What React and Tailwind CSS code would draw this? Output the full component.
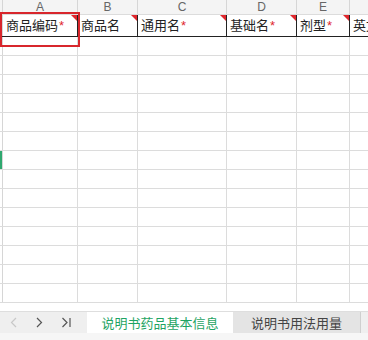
import React from "react";

const cols = [
  { key: "A", w: "w-[75px]", label: "商品编码", req: true },
  { key: "B", w: "w-[60px]", label: "商品名", req: false },
  { key: "C", w: "w-[89px]", label: "通用名", req: true },
  { key: "D", w: "w-[70px]", label: "基础名", req: true },
  { key: "E", w: "w-[53px]", label: "剂型", req: true },
  { key: "F", w: "w-[60px]", label: "英文名", req: false },
];

const rows = Array.from({ length: 14 });

function Corner() {
  return (
    <span className="absolute right-0 top-0 w-0 h-0 border-t-[6px] border-l-[6px] border-t-[#e0262c] border-l-transparent" />
  );
}

export default function App() {
  return (
    <div className="relative w-[368px] h-[340px] overflow-hidden bg-white font-['Liberation_Sans','Noto_Sans_CJK_SC',sans-serif]">
      <div className="h-[311px] overflow-hidden">
        {/* column letters */}
        <div className="flex h-[15px] bg-[#f4f4f4] border-b border-[#dcdcdc]">
          <div className="w-[3px] shrink-0 border-r border-[#d6d6d6]" />
          {cols.map(c => (
            <div key={c.key} className={`${c.w} shrink-0 border-r border-[#d6d6d6] flex items-center justify-center text-[12px] leading-none text-[#666]`}>
              {c.key !== "F" && c.key}
            </div>
          ))}
        </div>

        {/* header row */}
        <div className="flex h-[22px] border-b border-[#222]">
          <div className="w-[3px] shrink-0 border-r border-[#d6d6d6]" />
          {cols.map(c => (
            <div key={c.key} className={`${c.w} shrink-0 relative border-r border-[#222] flex items-center pl-[3px] overflow-hidden whitespace-nowrap text-[13px] text-[#222]`}>
              {c.label}
              {c.req && <span className="text-[#e0262c] ml-[1px]">*</span>}
              {c.key !== "F" && <Corner />}
            </div>
          ))}
        </div>

        {/* empty rows */}
        {rows.map((_, i) => (
          <div key={i} className="flex h-[19px] border-b border-[#dcdcdc]">
            <div className={`w-[3px] shrink-0 border-r border-[#d6d6d6] ${i === 6 ? "bg-[#2fa86f]" : ""}`} />
            {cols.map(c => (
              <div key={c.key} className={`${c.w} shrink-0 border-r border-[#dcdcdc]`} />
            ))}
          </div>
        ))}
      </div>

      {/* sheet tabs */}
      <div className="flex h-[22px] bg-[#efefef] border-t border-[#dedede] font-['Noto_Sans_CJK_SC',sans-serif]">
        <div className="w-[87px] shrink-0 flex items-center text-[#555]">
          <svg width="8" height="11" viewBox="0 0 8 11" className="ml-[10px]" fill="none" stroke="#c8c8c8" strokeWidth="1.2">
            <path d="M6 1 L1.5 5.5 L6 10" />
          </svg>
          <svg width="8" height="11" viewBox="0 0 8 11" className="ml-[17px]" fill="none" stroke="#555" strokeWidth="1.2">
            <path d="M2 1 L6.5 5.5 L2 10" />
          </svg>
          <svg width="11" height="11" viewBox="0 0 11 11" className="ml-[18px]" fill="none" stroke="#555" strokeWidth="1.2">
            <path d="M1.5 1 L6 5.5 L1.5 10" />
            <path d="M9 1 L9 10" />
          </svg>
        </div>
        <div className="w-[146px] shrink-0 bg-white flex items-center justify-center text-[13px] text-[#1fa463]">
          说明书药品基本信息
        </div>
        <div className="w-[128px] shrink-0 bg-[#e4e4e4] border-r border-[#cfcfcf] flex items-center justify-center text-[13px] text-[#444]">
          说明书用法用量
        </div>
      </div>
      <div className="h-[7px] bg-[#f6f6f6]" />

      {/* highlight box */}
      <div className="absolute left-0 top-[12px] w-[80px] h-[35px] border-2 border-[#d8262c]" />
    </div>
  );
}
